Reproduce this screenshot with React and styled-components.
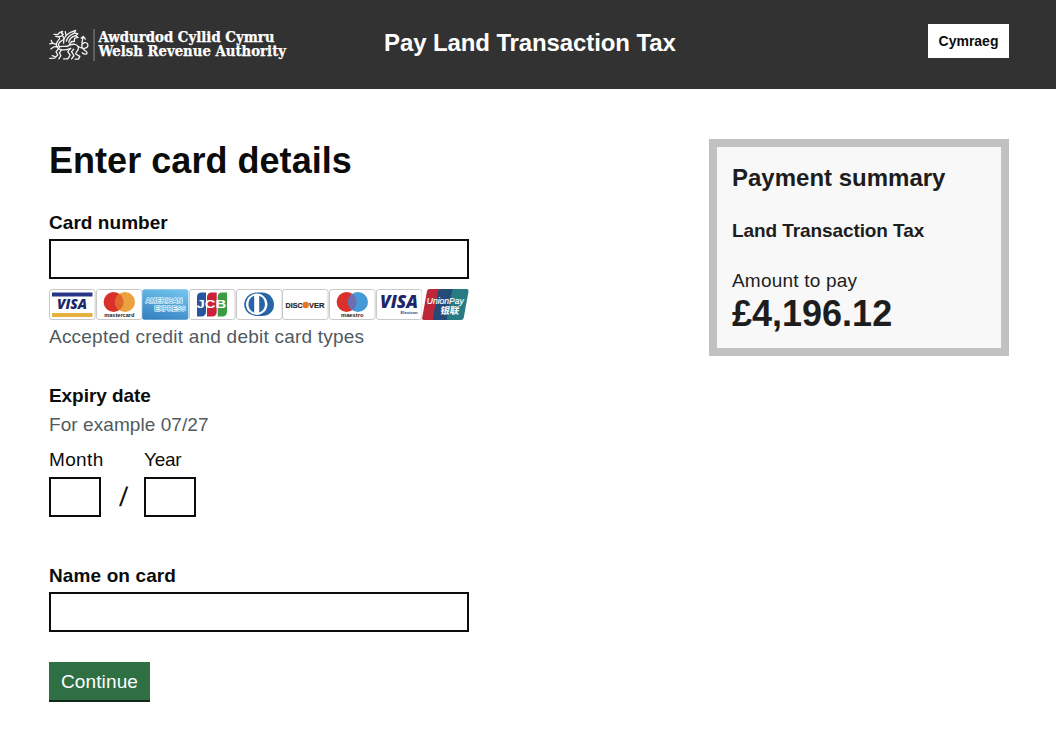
import React from "react";
import styled, { createGlobalStyle } from "styled-components";

const GlobalStyle = createGlobalStyle`
  *, *::before, *::after { box-sizing: border-box; }
  body {
    margin: 0;
    background: #fff;
    color: #0b0c0c;
    font-family: "Liberation Sans", Arial, sans-serif;
    font-size: 19px;
    line-height: 25px;
  }
`;

const Header = styled.header`
  height: 89px;
  background: #323232;
  color: #fff;
  display: grid;
  grid-template-columns: 335px 1fr auto;
  padding: 24px 47px 0 49px;
`;

const Logo = styled.svg`
  display: block;
  width: 240px;
  height: 40px;
`;

const ServiceName = styled.div`
  font-size: 24px;
  font-weight: 700;
  line-height: 30px;
  padding-top: 4px;
  white-space: nowrap;
  letter-spacing: ${(p) => p.$track || 0}px;
`;

const LanguageButton = styled.button`
  width: 81px;
  height: 34px;
  padding: 0;
  border: 0;
  background: #fff;
  color: #0b0c0c;
  font: 700 14px/34px "Liberation Sans", Arial, sans-serif;
`;

const Main = styled.main`
  display: flex;
  justify-content: space-between;
  align-items: flex-start;
  padding: 50px 47px 0 49px;
`;

const Form = styled.form`
  width: 420px;
`;

const Heading = styled.h1`
  margin: 0 0 29px;
  padding-top: 1px;
  font-size: 36px;
  line-height: 41px;
  letter-spacing: ${(p) => p.$track || 0}px;
`;

const Field = styled.div`
  margin-bottom: ${(p) => p.$gap}px;
`;

const Label = styled.label`
  display: block;
  font-weight: ${(p) => (p.$plain ? 400 : 700)};
  margin-bottom: ${(p) => p.$gap ?? 4}px;
  letter-spacing: ${(p) => p.$track || 0}px;
  white-space: nowrap;
`;

const Input = styled.input`
  display: block;
  width: 100%;
  height: 40px;
  border: 2px solid #0b0c0c;
  border-radius: 0;
  background: #fff;
  padding: 5px;
  font: inherit;
`;

const CardList = styled.div`
  display: flex;
  justify-content: space-between;
  margin: 10px 0 4px;
`;

const CardIcon = styled.svg`
  display: block;
  width: 46.6px;
  height: 31px;
`;

const Hint = styled.div`
  color: #505a5f;
  letter-spacing: ${(p) => p.$track || 0}px;
  margin-bottom: ${(p) => p.$gap || 0}px;
`;

const DateRow = styled.div`
  display: flex;
  align-items: flex-end;
`;

const DatePart = styled.div`
  width: 52px;
`;

const Slash = styled.span`
  width: 43px;
  padding-left: 2px;
  text-align: center;
  font-size: 27px;
  line-height: 40px;
  transform: skewX(-5deg);
`;

const SubmitButton = styled.button`
  display: block;
  width: 101px;
  height: 40px;
  padding: 1px 0 0;
  border: 0;
  border-bottom: 2px solid #10291b;
  background: #2f6f44;
  color: #fff;
  font: 400 19px/37px "Liberation Sans", Arial, sans-serif;
  letter-spacing: ${(p) => p.$track || 0}px;
`;

const Summary = styled.aside`
  width: 300px;
  height: 217px;
  border: 8px solid #bfc1c3;
  background: #f8f8f8;
  color: #1d1d1d;
  padding: 16px 15px;
`;

const SummaryTitle = styled.h2`
  margin: 0 0 25px;
  font-size: 24px;
  line-height: 30px;
`;

const SummaryItem = styled.p`
  margin: 0 0 25px;
  font-weight: 700;
  letter-spacing: ${(p) => p.$track || 0}px;
`;

const SummaryLabel = styled.p`
  margin: 0;
  letter-spacing: ${(p) => p.$track || 0}px;
`;

const Amount = styled.p`
  margin: 0;
  font-size: 36px;
  font-weight: 700;
  line-height: 42px;
`;

function AuthorityLogo() {
  return (
    <Logo viewBox="0 0 240 40" role="img" aria-label="Awdurdod Cyllid Cymru, Welsh Revenue Authority">
      <g transform="translate(-11.6 -4.2) scale(.345 .339)" fill="none" stroke="#f4f4f4" strokeWidth="3.8" strokeLinecap="round" strokeLinejoin="round">
        {/* head and jaws */}
        <path d="M48 43 L58 44 L64 38 L73 34 L70 40 L75 43 L70 48 L61 50 L53 49" />
        {/* neck and chest */}
        <path d="M73 48 C80 53 76 60 69 63 C61 67 59 74 64 81 M64 53 C66 57 60 60 57 66 C53 73 55 79 60 84" />
        {/* wing */}
        <path d="M76 69 C75 57 82 45 94 38 L111 31 L107 39 L117 41 L111 47 L118 52 L108 54 L107 64 L99 64 L92 73 M84 63 C86 53 95 45 105 40 M91 66 C93 57 100 50 110 47 M83 47 L81 35" />
        {/* body */}
        <path d="M64 79 C76 77 82 81 92 76 C104 69 116 72 119 81 M65 87 C78 90 88 89 97 84" />
        {/* fore legs */}
        <path d="M56 73 L44 69 L40 61 M44 69 L36 71 M59 79 L47 80 L39 86 M63 84 L54 94 L59 104 L50 113 L36 114 M52 109 L43 106 M70 89 L64 97 L68 106 L62 115" />
        {/* hind legs */}
        <path d="M95 85 L88 94 L95 104 L88 115 L76 115 M105 87 L99 94 L106 106 L99 115 M119 82 C120 91 110 95 111 101 L123 108 L119 116 L109 116" />
        {/* tail */}
        <path d="M118 79 C132 88 149 84 146 73 C142 62 126 68 129 80 C131 90 144 91 144 98 C143 103 133 102 130 97 M129 68 L133 49 L127 54 M133 49 L139 57" />
      </g>
      <path d="M45 5V37" stroke="#8d8d8d" strokeWidth="1" />
      <g fill="#fff" stroke="#fff" strokeWidth=".25" fontFamily='"DejaVu Serif Condensed", "DejaVu Serif", serif' fontWeight="700" fontSize="14.3">
        <text x="49.5" y="17.8" textLength="176" lengthAdjust="spacingAndGlyphs">Awdurdod Cyllid Cymru</text>
        <text x="49.5" y="32.3" textLength="187.5" lengthAdjust="spacingAndGlyphs">Welsh Revenue Authority</text>
      </g>
    </Logo>
  );
}

function Card({ name, children }) {
  return (
    <CardIcon viewBox="0 0 46.6 31" role="img" aria-label={name}>
      <rect x=".5" y=".5" width="45.6" height="30" rx="2.5" fill="#fff" stroke="#c9c9c9" />
      {children}
    </CardIcon>
  );
}

const sans = '"Liberation Sans", Arial, sans-serif';

function AcceptedCards() {
  return (
    <CardList>
      <Card name="Visa">
        <path d="M3 3.5H43.5V7.5H3Z" fill="#293688" />
        <path d="M3 24H43.5V28H3Z" fill="#e7b13d" />
        <text x="8" y="20.3" fontFamily='"Open Sans", sans-serif' fontStyle="italic" fontWeight="800" fontSize="14" textLength="30" lengthAdjust="spacingAndGlyphs" fill="#1c2768">VISA</text>
      </Card>
      <Card name="Mastercard">
        <circle cx="17.6" cy="13" r="10" fill="#d9302c" />
        <circle cx="29" cy="13" r="10" fill="#eba23e" />
        <path d="M23.3 4.8a10 10 0 0 1 0 16.4a10 10 0 0 1 0-16.4" fill="#e0682c" />
        <text x="8.3" y="28" fontFamily={sans} fontWeight="700" fontSize="5.6" textLength="30" lengthAdjust="spacingAndGlyphs" fill="#222">mastercard</text>
      </Card>
      <CardIcon viewBox="0 0 46.6 31" role="img" aria-label="American Express">
        <defs>
          <linearGradient id="amex" x1=".7" y1="0" x2=".3" y2="1">
            <stop stopColor="#71c2ec" />
            <stop offset="1" stopColor="#3583c2" />
          </linearGradient>
        </defs>
        <rect x=".2" y=".2" width="46.2" height="30.6" rx="2.5" fill="url(#amex)" />
        <g fontFamily={sans} fontWeight="700" fontSize="6.8" fill="#69b7e3" stroke="#f2faff" strokeWidth="1.15" paintOrder="stroke">
          <text x="3.5" y="14.5" textLength="37" lengthAdjust="spacingAndGlyphs">AMERICAN</text>
          <text x="12.5" y="22.3" textLength="31" lengthAdjust="spacingAndGlyphs">EXPRESS</text>
        </g>
      </CardIcon>
      <Card name="JCB">
        <path d="M12 3.5H17V23a4.5 4.5 0 0 1-4.5 4.5H8V8a4.5 4.5 0 0 1 4-4.5Z" fill="#28559d" />
        <path d="M22.5 3.5H27.7V23a4.5 4.5 0 0 1-4.5 4.5H18V8a4.5 4.5 0 0 1 4.5-4.5Z" fill="#c92239" />
        <path d="M33 3.5H38V23a4.5 4.5 0 0 1-4.5 4.5H28.7V8A4.5 4.5 0 0 1 33 3.5Z" fill="#3a9c41" />
        <text x="7.6" y="19.3" fontFamily={sans} fontWeight="700" fontSize="11" textLength="29.8" lengthAdjust="spacingAndGlyphs" fill="#fff">JCB</text>
      </Card>
      <Card name="Diners Club">
        <path d="M21 3.5H26C33 3.5 38 9 38 15.7C38 22.5 32.5 27 26 27H21C14 27 8.2 22 8.2 15.5C8.2 9 14 3.5 21 3.5Z" fill="#2864a6" />
        <circle cx="20.7" cy="15.2" r="10.7" fill="#fff" />
        <path d="M18.2 6.8A9 9 0 0 0 18.2 23.6ZM23.2 6.8A9 9 0 0 1 23.2 23.6Z" fill="#2864a6" />
      </Card>
      <Card name="Discover">
        <g fontFamily={sans} fontWeight="700" fontSize="8" fill="#222" stroke="#222" strokeWidth=".2">
          <text x="3.6" y="18.8" textLength="17" lengthAdjust="spacingAndGlyphs">DISC</text>
          <text x="27" y="18.8" textLength="15.5" lengthAdjust="spacingAndGlyphs">VER</text>
        </g>
        <circle cx="23.7" cy="16" r="3.2" fill="#e87528" />
      </Card>
      <Card name="Maestro">
        <circle cx="17.6" cy="13" r="10" fill="#d9302c" />
        <circle cx="29" cy="13" r="10" fill="#4599d6" />
        <path d="M23.3 4.8a10 10 0 0 1 0 16.4a10 10 0 0 1 0-16.4" fill="#6d6eb1" />
        <text x="12" y="28" fontFamily={sans} fontWeight="700" fontSize="5.6" textLength="22.5" lengthAdjust="spacingAndGlyphs" fill="#222">maestro</text>
      </Card>
      <Card name="Visa Electron">
        <text x="4" y="19.4" fontFamily='"Open Sans", sans-serif' fontStyle="italic" fontWeight="800" fontSize="17" textLength="38" lengthAdjust="spacingAndGlyphs" fill="#1d2768">VISA</text>
        <text x="24.4" y="24.8" fontFamily={sans} fontWeight="700" fontSize="4.2" textLength="17.3" lengthAdjust="spacingAndGlyphs" fill="#343d7a">Electron</text>
      </Card>
      <CardIcon viewBox="0 0 46.6 31" role="img" aria-label="UnionPay">
        <path d="M7.5 0H18L12 31H2Q-.2 31 .3 28.2L5 2Q5.5 0 7.5 0Z" fill="#bd2839" />
        <path d="M18 0H32L26 31H12Q10.6 31 11.1 28.2L16 2Q16.5 0 18 0Z" fill="#244b78" />
        <path d="M32 0H44.5Q47 0 46.4 3L41.7 29Q41.3 31 39 31H26Q24.5 31 25 28.2L30 2Q30.5 0 32 0Z" fill="#287b82" />
        <text x="4.8" y="14.6" fontFamily={sans} fontStyle="italic" fontWeight="400" stroke="#fff" strokeWidth=".2" fontSize="9.4" textLength="37" lengthAdjust="spacingAndGlyphs" fill="#fff">UnionPay</text>
        <text x="18" y="24.8" transform="translate(4.2 0) skewX(-10)" fontFamily='"Noto Sans CJK SC", sans-serif' fontWeight="700" fontSize="9.5" textLength="19" lengthAdjust="spacingAndGlyphs" fill="#fff">银联</text>
      </CardIcon>
    </CardList>
  );
}

export default function App() {
  return (
    <>
      <GlobalStyle />
      <Header>
        <AuthorityLogo />
        <ServiceName $track={-0.11}>Pay Land Transaction Tax</ServiceName>
        <LanguageButton>Cymraeg</LanguageButton>
      </Header>
      <Main>
        <Form onSubmit={(e) => e.preventDefault()}>
          <Heading $track={0.04}>Enter card details</Heading>
          <Field $gap={34}>
            <Label htmlFor="number" $track={0.05}>Card number</Label>
            <Input id="number" />
            <AcceptedCards />
            <Hint $track={0.22}>Accepted credit and debit card types</Hint>
          </Field>
          <Field $gap={46}>
            <Label as="div" $track={-0.06}>Expiry date</Label>
            <Hint $gap={10} $track={0.07}>For example 07/27</Hint>
            <DateRow>
              <DatePart>
                <Label htmlFor="month" $plain $gap={5} $track={0.35}>Month</Label>
                <Input id="month" />
              </DatePart>
              <Slash>/</Slash>
              <DatePart>
                <Label htmlFor="year" $plain $gap={5} $track={-0.3}>Year</Label>
                <Input id="year" />
              </DatePart>
            </DateRow>
          </Field>
          <Field $gap={30}>
            <Label htmlFor="name" $track={0.12}>Name on card</Label>
            <Input id="name" />
          </Field>
          <SubmitButton $track={0.12}>Continue</SubmitButton>
        </Form>
        <Summary>
          <SummaryTitle>Payment summary</SummaryTitle>
          <SummaryItem $track={-0.09}>Land Transaction Tax</SummaryItem>
          <SummaryLabel $track={0.2}>Amount to pay</SummaryLabel>
          <Amount>£4,196.12</Amount>
        </Summary>
      </Main>
    </>
  );
}
